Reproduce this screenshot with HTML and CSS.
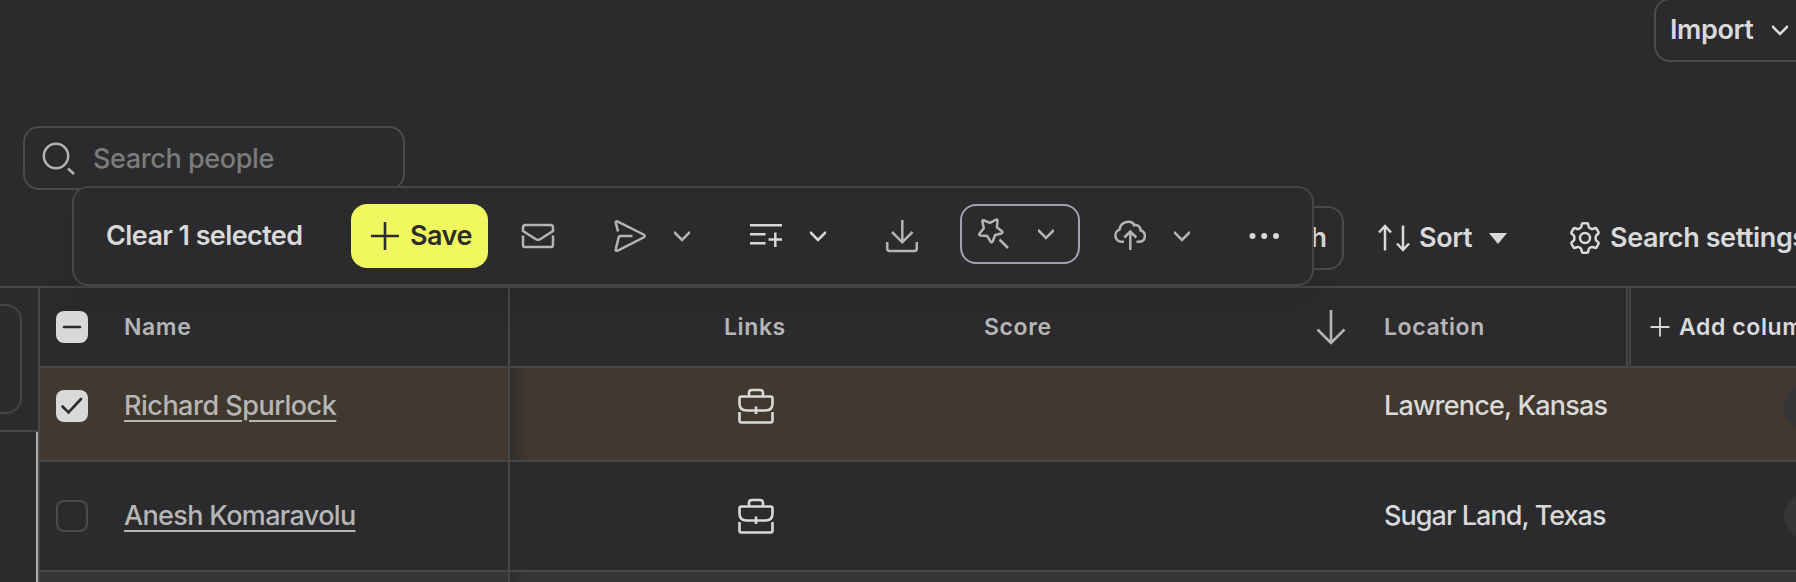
FILE: index.html
```html
<!DOCTYPE html>
<html lang="en">
<head>
<meta charset="UTF-8">
<title>People</title>
<link rel="stylesheet" href="styles.css">
</head>
<body>

<!-- icons used more than once -->
<svg class="defs">
	<symbol id="chevron" viewBox="0 0 16 16"><path d="M0 4l8 8 8-8"/></symbol>
	<symbol id="briefcase" viewBox="0 0 36 36">
		<path d="M11 8V5q0-3 3-3h8q3 0 3 3v3"/>
		<path d="M3.500 8.500h29q2 0 2 2v5q0 7-7 7h-19q-7 0-7-7v-5q0-2 2-2z"/>
		<path d="M18 18.500v7.500M1.500 24v8.500q0 2 2 2h29q2 0 2-2V24"/>
	</symbol>
</svg>

<header class="top">
	<button class="import"><span>Import</span> <svg class="icon chev bright"><use href="#chevron"/></svg></button>
</header>

<div class="search">
	<svg class="icon search-icon" viewBox="0 0 34 34"><circle cx="14" cy="15" r="12.200"/><path d="M26 27.500l6 5.500"/></svg>
	<span>Search people</span>
</div>

<div class="actions">
	<button class="save-search"><span>h</span></button>
	<button class="sort">
		<svg class="icon sort-icon" viewBox="0 0 32 28"><path d="M7 26.500V2M1 8.500L7 2l6 6.500M25 1.500V26M19 19.500L25 26l6-6.500"/></svg>
		<span>Sort</span>
		<i class="caret"></i>
	</button>
	<button class="settings">
		<svg class="icon" viewBox="0 0 32 32"><circle cx="16" cy="16" r="5"/><path d="M14 1.300h4q1 0 1.200 1l.5 2.500q.2.800 1 1.200l1.400.8q.8.500 1.600.2l2.300-.8q1-.3 1.500.5l2 3.400q.5 1-.3 1.600l-1.900 1.700q-.6.500-.6 1.300v2.600q0 .8.600 1.300l1.900 1.700q.8.700.3 1.600l-2 3.400q-.5.800-1.500.5l-2.300-.8q-.8-.3-1.600.2l-1.400.8q-.8.400-1 1.200l-.5 2.500q-.2 1-1.200 1h-4q-1 0-1.200-1l-.5-2.500q-.2-.8-1-1.200l-1.400-.8q-.8-.5-1.600-.2l-2.300.8q-1 .3-1.500-.5l-2-3.400q-.5-.9.300-1.600l1.900-1.700q.6-.5.600-1.300v-2.600q0-.8-.6-1.300l-1.900-1.700q-.8-.6-.3-1.600l2-3.400q.5-.8 1.500-.5l2.300.8q.8.300 1.600-.2l1.400-.8q.8-.4 1-1.200l.5-2.500q.2-1 1.200-1z"/></svg>
		<span>Search settings</span>
	</button>
</div>

<div class="main">
	<aside class="side">
		<div class="side-top"><div class="side-box"></div></div>
		<div class="side-body"></div>
	</aside>

	<div class="table">
		<div class="row head">
			<div class="cell name"><i class="check on"><svg class="icon" viewBox="0 0 32 32"><path d="M8 16h16"/></svg></i><span>Name</span></div>
			<div class="cell links"><span>Links</span></div>
			<div class="cell score"><span>Score</span><svg class="icon down" viewBox="0 0 30 36"><path d="M15 1v33M1.500 20.500L15 34l13.500-13.500"/></svg></div>
			<div class="cell location"><span>Location</span></div>
			<div class="cell add"><svg class="icon" viewBox="0 0 20 20"><path d="M.5 10h19M10 .5v19"/></svg><span>Add column</span></div>
		</div>
		<div class="row selected">
			<div class="cell name"><i class="check on"><svg class="icon" viewBox="0 0 32 32"><path d="M6.500 16.500l6 6 12.500-13.500"/></svg></i><a class="person richard">Richard Spurlock</a></div>
			<div class="cell links"><svg class="icon case"><use href="#briefcase"/></svg></div>
			<div class="cell score"></div>
			<div class="cell location"><span class="kansas">Lawrence, Kansas</span></div>
			<div class="cell tags"><i class="pill"></i></div>
		</div>
		<div class="row">
			<div class="cell name"><i class="check"></i><a class="person anesh">Anesh Komaravolu</a></div>
			<div class="cell links"><svg class="icon case"><use href="#briefcase"/></svg></div>
			<div class="cell score"></div>
			<div class="cell location"><span class="texas">Sugar Land, Texas</span></div>
			<div class="cell tags"><i class="pill"></i></div>
		</div>
		<div class="row hover">
			<div class="cell name"></div>
			<div class="cell links"></div>
		</div>
	</div>
</div>

<!-- bulk actions, floats over the page -->
<div class="bulk">
	<span class="clear">Clear 1 selected</span>
	<button class="save"><svg class="icon" viewBox="0 0 32 32"><path d="M2 16h28M16 2v28"/></svg><span>Save</span></button>
	<svg class="icon mail" viewBox="0 0 32 32"><path d="M1 12V7.500Q1 5 3.500 5h25Q31 5 31 7.500V11l-12.500 8q-2.500 1.600-5 0L1 11M1 15.500V25q0 2 2 2h26q2 0 2-2v-9.500"/></svg>
	<svg class="icon group" viewBox="0 0 32 32"><path d="M4 11.500L1.800 3Q1.300 .5 3.800 1.600L29.500 14.500q2.500 1.500 0 3L3.800 30.500q-2.700 1-2-1.500L4.600 17.500Q5 16 6.500 16H18.500"/></svg>
	<svg class="icon chev"><use href="#chevron"/></svg>
	<svg class="icon bright group" viewBox="0 0 32 32"><path d="M0 5.300h32M0 14.300h15.500M0 23.300h15.500M18.500 19.500h13.500M25.300 12.500v14.500"/></svg>
	<svg class="icon chev bright"><use href="#chevron"/></svg>
	<svg class="icon group" viewBox="0 0 32 32"><path d="M16.300 0v22M6 12l10.300 10.300L26.500 12M1.200 22v6.500q0 2.500 2.500 2.500h24.600q2.500 0 2.500-2.500V22"/></svg>
	<button class="wand">
		<svg class="icon" viewBox="0 0 32 32"><path d="M4.500 4q-.5-2.200 1.600-1.500L12 4.800l5.500-3q2.200-1 2 1.200l-.6 6.200 4.900 4q1.600 1.600-.5 2.300l-6.200 1.600-2.300 6.200q-1 2-2.300.2l-3.400-5.600-6.600-.5q-2.200-.3-.9-2L5.800 10.200zM21.500 21.500l8.500 8.500"/></svg>
		<svg class="icon chev"><use href="#chevron"/></svg>
	</button>
	<svg class="icon mail" viewBox="0 0 32 32"><path d="M10 21.800H7.500a6.300 6.300 0 0 1-2-12.200c1.500-9.500 12.500-9.500 15-4.500 4.500-.3 6 2.500 6 5.200 6.500 2.200 5.500 11.500-1.500 11.500h-2.500M16.300 30V11.500M10.300 17.500l6-6 6 6M20.500 5.100l-1.500.9"/></svg>
	<svg class="icon chev"><use href="#chevron"/></svg>
	<svg class="icon dots" viewBox="0 0 32 32"><circle cx="4.500" cy="16" r="3"/><circle cx="16.200" cy="16" r="3"/><circle cx="28" cy="16" r="3"/></svg>
</div>

</body>
</html>
```
FILE: styles.css
```css
* {
	box-sizing: border-box;
}

body {
	margin: 0;
	width: 1796px;
	height: 582px;
	overflow: hidden;
	position: relative;
	background: #2b2b2d;
	color: #d9d9d9;
	font-family: Inter, "Liberation Sans", sans-serif;
	font-size: 27px;
	font-weight: 450;
}

button {
	display: flex;
	flex: none;
	align-items: center;
	margin: 0;
	padding: 0;
	border: 0;
	background: none;
	color: inherit;
	font: inherit;
	font-weight: 600;
	white-space: nowrap;
}

span,
a {
	padding-bottom: 2px;
	white-space: nowrap;
}

.defs {
	display: none;
}

.icon {
	flex: none;
	width: 32px;
	height: 32px;
	fill: none;
	stroke: #b4b4b4;
	stroke-width: 2.5;
	overflow: visible;
}

.chev {
	width: 16px;
	height: 16px;
	margin-left: 28px;
}

.bright {
	stroke: #d9d9d9;
}

/* header */

.top {
	display: flex;
	height: 126px;
	padding-left: 1654px;
}

.import {
	width: 170px;
	height: 64px;
	margin-top: -2px;
	padding-left: 14px;
	border: 2px solid #4b4b4c;
	border-radius: 16px;
	letter-spacing: -0.4px;
}

.import .chev {
	margin-left: 19px;
}

.search {
	display: flex;
	align-items: center;
	width: 382px;
	height: 64px;
	margin-left: 23px;
	padding-left: 17px;
	border: 2px solid #4b4b4c;
	border-radius: 16px;
	color: #7c7b7c;
	letter-spacing: -0.4px;
}

.search span {
	padding-bottom: 0;
}

.search-icon {
	width: 34px;
	height: 34px;
	margin-right: 17px;
}

.actions {
	display: flex;
	align-items: center;
	height: 96px;
	padding-left: 1224px;
}

.save-search {
	width: 120px;
	height: 64px;
	padding-right: 15px;
	justify-content: flex-end;
	border: 2px solid #4b4b4c;
	border-radius: 16px;
}

.sort {
	width: 225px;
	padding-left: 34px;
	letter-spacing: -0.4px;
}

.sort-icon {
	height: 28px;
	margin-right: 9px;
}

.caret {
	margin-left: 17px;
	border: 9.5px solid transparent;
	border-top: 11px solid #d9d9d9;
	border-bottom: 0;
}

.settings {
	letter-spacing: -0.4px;
}

.settings span {
	margin-left: 9px;
}

.sort .icon,
.settings .icon {
	stroke: #d9d9d9;
}

/* table */

.main {
	display: flex;
	height: 296px;
	border-top: 2px solid #464647;
}

.side {
	width: 38px;
	overflow: hidden;
}

.side-top {
	height: 144px;
	padding-top: 16px;
	border-bottom: 2px solid #464647;
}

.side-box {
	width: 82px;
	height: 110px;
	margin-left: -60px;
	border: 2px solid #464545;
	border-radius: 16px;
}

.side-body {
	height: 150px;
	border-right: 2px solid #aeaeae;
}

.table {
	width: 1758px;
	overflow: hidden;
	border-left: 2px solid #464647;
}

.row {
	display: grid;
	grid-template-columns: 470px 450px 401px 267px 1fr;
	height: 110px;
	border-bottom: 2px solid #464647;
}

.head {
	position: relative;
	z-index: 1;
	height: 80px;
	background: #2b2b2d;
	color: #b6b6b6;
	font-size: 23px;
	font-weight: 600;
	letter-spacing: 0.6px;
}

.head span {
	padding-bottom: 0;
}

/* scrolled a little under the header */
.selected {
	margin-top: -16px;
	background: #41382f;
}

.hover {
	background: #353537;
}

.cell {
	display: flex;
	align-items: center;
	min-width: 0;
}

.name {
	padding-left: 16px;
	border-right: 2px solid #464647;
}

.links {
	padding-left: 228px;
	background: linear-gradient(to right, rgba(43,43,45,.8), rgba(43,43,45,0) 15px);
}

.head .links {
	padding-left: 214px;
}

.score {
	padding-left: 24px;
}

.down {
	width: 30px;
	height: 36px;
	margin-left: auto;
	margin-right: 15px;
	stroke-width: 2.6;
}

.location {
	padding-left: 23px;
}

.head .location {
	border-right: 2px solid #464647;
}

.head .add {
	margin-left: 1px;
	padding-left: 19px;
	border-left: 2px solid #464647;
	color: #d9d9d9;
}

.add .icon {
	width: 20px;
	height: 20px;
	margin-right: 9px;
	stroke: #d9d9d9;
	stroke-width: 1.8;
}

.tags {
	padding-left: 156px;
}

.pill {
	flex: none;
	width: 90px;
	height: 46px;
	border-radius: 23px;
	background: #353537;
}

.check {
	flex: none;
	width: 32px;
	height: 32px;
	margin-right: 36px;
	border: 2px solid #4b4b4c;
	border-radius: 8px;
}

.check.on {
	border: 0;
	background: #d9d9d9;
}

.check .icon {
	display: block;
	stroke: #2b2b2d;
	stroke-width: 2.6;
	stroke-linecap: round;
}

.person {
	color: #b6b6b6;
	text-decoration: underline;
	text-decoration-thickness: 2px;
	text-underline-offset: 5px;
}

.richard {
	letter-spacing: -0.5px;
}

.anesh {
	letter-spacing: -0.65px;
}

.kansas {
	letter-spacing: -0.8px;
}

.texas {
	letter-spacing: -0.95px;
}

.case {
	width: 36px;
	height: 36px;
	stroke: #d9d9d9;
	stroke-width: 2.6;
}

/* bulk bar */

.bulk {
	position: absolute;
	z-index: 2;
	top: 186px;
	left: 72px;
	display: flex;
	align-items: center;
	width: 1242px;
	height: 100px;
	padding-left: 32px;
	border: 2px solid #464545;
	border-radius: 16px;
	background: #2b2b2d;
	box-shadow: 0 16px 32px rgba(0,0,0,.07);
}

.clear {
	width: 245px;
	font-weight: 600;
	letter-spacing: -0.6px;
}

.save {
	width: 137px;
	height: 64px;
	padding-left: 18px;
	border-radius: 16px;
	background: #f1f85f;
	color: #2b2b2d;
	letter-spacing: -0.5px;
}

.save .icon {
	margin-right: 9px;
	stroke: #2b2b2d;
	stroke-width: 2.6;
}

.mail {
	margin-left: 34px;
}

.group {
	margin-left: 60px;
}

.wand {
	width: 120px;
	height: 60px;
	margin: 0 0 4px 42px;
	padding-left: 16px;
	border: 2px solid #a69eb0;
	border-radius: 16px;
}

.dots {
	margin-left: 58px;
	fill: #d9d9d9;
	stroke: none;
}
```
